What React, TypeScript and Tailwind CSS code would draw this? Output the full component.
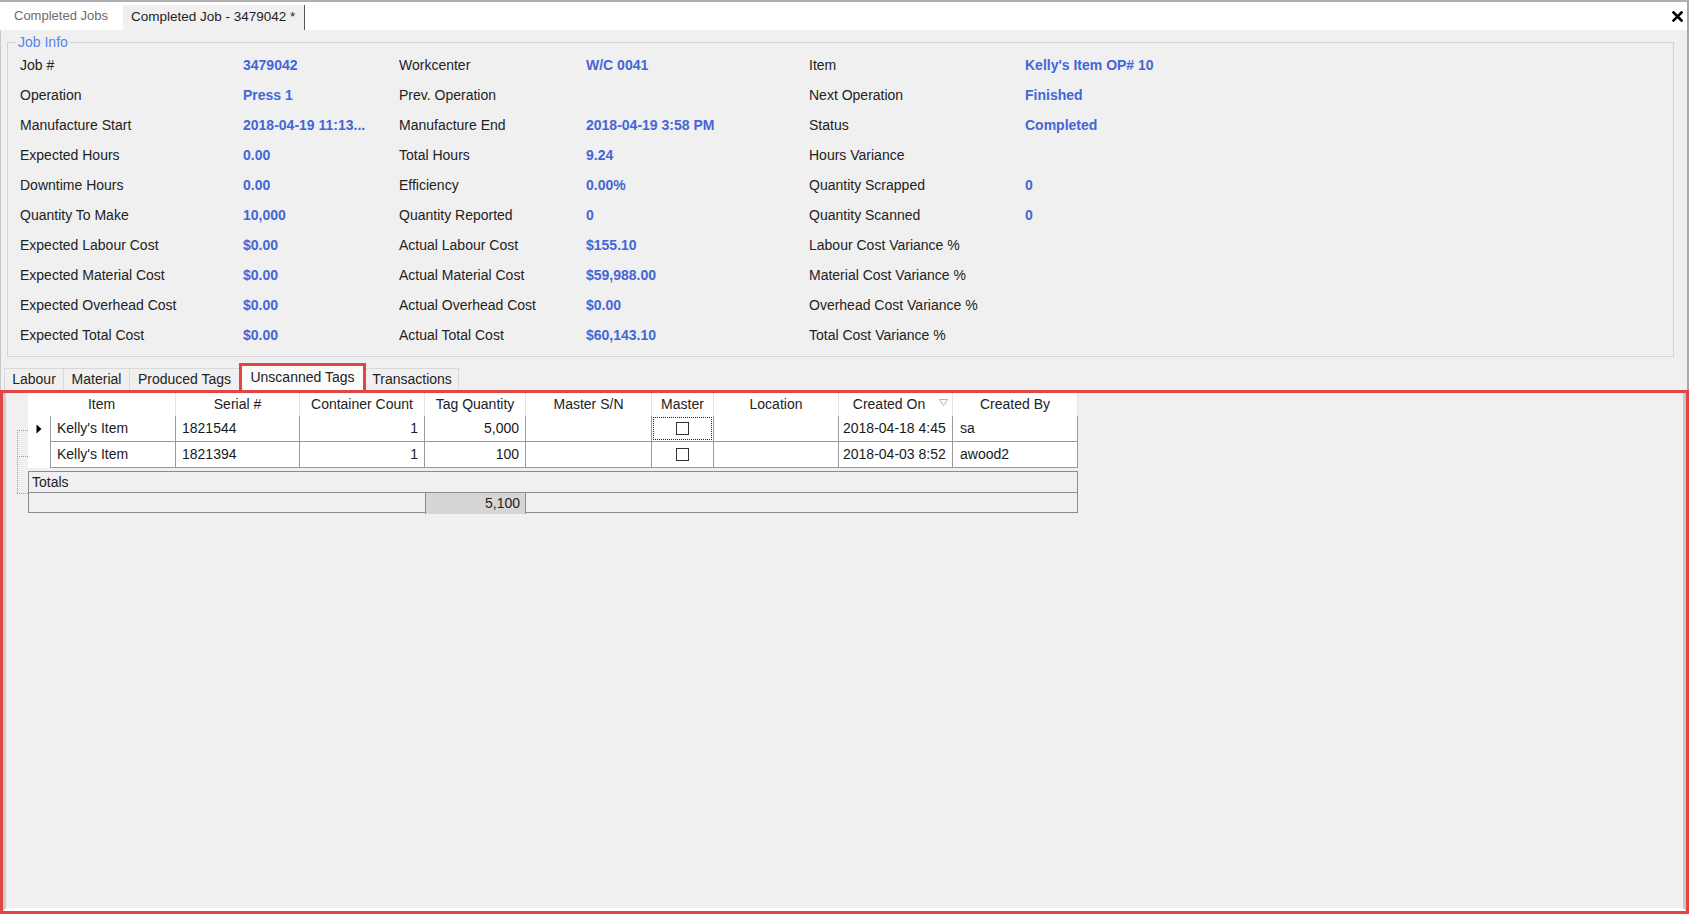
import React from "react";

type Pair = [string, string];

const info: Pair[][] = [
  [["Job #", "3479042"], ["Workcenter", "W/C 0041"], ["Item", "Kelly's Item OP# 10"]],
  [["Operation", "Press 1"], ["Prev. Operation", ""], ["Next Operation", "Finished"]],
  [["Manufacture Start", "2018-04-19 11:13..."], ["Manufacture End", "2018-04-19 3:58 PM"], ["Status", "Completed"]],
  [["Expected Hours", "0.00"], ["Total Hours", "9.24"], ["Hours Variance", ""]],
  [["Downtime Hours", "0.00"], ["Efficiency", "0.00%"], ["Quantity Scrapped", "0"]],
  [["Quantity To Make", "10,000"], ["Quantity Reported", "0"], ["Quantity Scanned", "0"]],
  [["Expected Labour Cost", "$0.00"], ["Actual Labour Cost", "$155.10"], ["Labour Cost Variance %", ""]],
  [["Expected Material Cost", "$0.00"], ["Actual Material Cost", "$59,988.00"], ["Material Cost Variance %", ""]],
  [["Expected Overhead Cost", "$0.00"], ["Actual Overhead Cost", "$0.00"], ["Overhead Cost Variance %", ""]],
  [["Expected Total Cost", "$0.00"], ["Actual Total Cost", "$60,143.10"], ["Total Cost Variance %", ""]],
];

const tags = [
  { item: "Kelly's Item", serial: "1821544", count: "1", qty: "5,000", on: "2018-04-18 4:45", by: "sa", current: true },
  { item: "Kelly's Item", serial: "1821394", count: "1", qty: "100", on: "2018-04-03 8:52", by: "awood2", current: false },
];

const gridCols = "grid grid-cols-[23px_125px_124px_125px_101px_126px_62px_125px_114px_125px]";
const cellBase = "bg-white border-r border-b border-[#9a9a9a] flex overflow-hidden whitespace-nowrap text-[#1a1a1a]";
const cell = `${cellBase} items-center px-[6px]`;
const headCell = "border-r border-[#e4e4e4] flex items-center justify-center whitespace-nowrap text-[#222]";

function Checkbox() {
  return <div className="w-[13px] h-[13px] border border-[#333] bg-white" />;
}

export default function App() {
  return (
    <div className="w-[1689px] h-[914px] flex flex-col bg-[#f0f0f0] overflow-hidden font-['Liberation_Sans',Arial,sans-serif] text-[14px] text-[#222]">
      {/* document tabs */}
      <div className="h-[30px] shrink-0 flex bg-white border-t-2 border-t-[#b0b0b0] border-r-2 border-r-[#a8a8a8]">
        <div className="w-[123px] pl-[14px] flex items-center text-[13px] text-[#6d6d6d]">Completed Jobs</div>
        <div className="w-[182px] mt-[3px] pl-[8px] flex items-center bg-[#f0f0f0] border-r border-[#555] text-[13.5px] text-[#1e1e1e] whitespace-nowrap">
          Completed Job - 3479042 *
        </div>
        <div className="flex-1" />
        <div className="flex items-center pr-[4px]">
          <svg width="11" height="11" viewBox="0 0 11 11">
            <path d="M1.5 1.5 L9.5 9.5 M9.5 1.5 L1.5 9.5" stroke="#000" strokeWidth="2.6" strokeLinecap="square" />
          </svg>
        </div>
      </div>

      <div className="shrink-0 border-r-2 border-r-[#a8a8a8] border-l border-l-[#c8c8c8]">
        <fieldset className="ml-[6px] mr-[13px] mt-[4px] border border-[#d4d4d4]">
          <legend className="ml-[8px] px-[2px] leading-[16px] text-[#5a85e4]">Job Info</legend>
          <div className="pl-[12px] pb-[6px] grid grid-cols-[223px_156px_187px_223px_216px_1fr]">
            {info.map((row, i) => (
              <React.Fragment key={i}>
                {row.map(([label, value], j) => (
                  <React.Fragment key={j}>
                    <div className="h-[30px] flex items-center whitespace-nowrap">{label}</div>
                    <div className="h-[30px] flex items-center whitespace-nowrap overflow-hidden font-bold text-[#4466d6]">{value}</div>
                  </React.Fragment>
                ))}
              </React.Fragment>
            ))}
          </div>
        </fieldset>

        {/* sub tabs */}
        <div className="h-[33px] flex items-end pl-[3px]">
          <div className="w-[59px] h-[22px] flex items-center justify-center border-t border-l border-[#d9d9d9]">Labour</div>
          <div className="w-[66px] h-[22px] flex items-center justify-center border-t border-l border-[#d9d9d9]">Material</div>
          <div className="w-[110px] h-[22px] flex items-center justify-center border-t border-l border-[#d9d9d9]">Produced Tags</div>
          <div className="w-[127px] h-[30px] -mb-[3px] relative z-10 flex items-start justify-center pt-[1px] bg-[#fbfbfb] border-[3px] border-[#e04646]">
            Unscanned Tags
          </div>
          <div className="w-[93px] h-[22px] flex items-center justify-center border-t border-r border-[#d9d9d9]">Transactions</div>
        </div>
      </div>

      {/* tab page */}
      <div className="flex-1 border-[3px] border-[#e04646]">
        <div className="h-full flex border-l-[3px] border-l-[#cfcfcf] border-r-[3px] border-r-[#c8c8c8] border-b-[3px] border-b-white">
          <div className="w-[22px] shrink-0">
            <svg width="22" height="120" viewBox="0 0 22 120">
              <g stroke="#9c9c9c" strokeWidth="1" strokeDasharray="1 1" fill="none">
                <path d="M11.5 37 V100" />
                <path d="M11 37.5 H22" />
                <path d="M11 63.5 H22" />
                <path d="M11 100.5 H22" />
              </g>
            </svg>
          </div>

          <div className="w-[1050px] shrink-0">
            {/* header */}
            <div className={`${gridCols} h-[23px] bg-white`}>
              <div className={`${headCell} col-span-2`}>Item</div>
              <div className={headCell}>Serial #</div>
              <div className={headCell}>Container Count</div>
              <div className={headCell}>Tag Quantity</div>
              <div className={headCell}>Master S/N</div>
              <div className={headCell}>Master</div>
              <div className={headCell}>Location</div>
              <div className={`${headCell} justify-between`}>
                <span className="flex-1 text-center">Created On</span>
                <svg width="9" height="7" viewBox="0 0 9 7" className="mr-[4px] -mt-[4px]">
                  <path d="M0.5 0.5 H8.5 L4.5 6.5 Z" fill="none" stroke="#b4b4b4" strokeWidth="1" />
                </svg>
              </div>
              <div className={headCell}>Created By</div>
            </div>

            {/* rows */}
            {tags.map((t, i) => (
              <div key={i} className={`${gridCols} h-[26px]`}>
                <div className="bg-white border-r border-[#9a9a9a] flex items-center justify-center">
                  {t.current && (
                    <svg width="6" height="10" viewBox="0 0 6 10">
                      <path d="M0.5 0.5 L5.5 5 L0.5 9.5 Z" fill="#000" />
                    </svg>
                  )}
                </div>
                <div className={cell}>{t.item}</div>
                <div className={cell}>{t.serial}</div>
                <div className={`${cell} justify-end`}>{t.count}</div>
                <div className={`${cell} justify-end`}>{t.qty}</div>
                <div className={cell} />
                <div className="bg-white border-r border-b border-[#9a9a9a] flex">
                  <div className={`flex-1 m-[1px] flex items-center justify-center ${t.current ? "border border-dotted border-[#222]" : ""}`}>
                    <Checkbox />
                  </div>
                </div>
                <div className={cell} />
                <div className={`${cellBase} items-start pt-[2px] pl-[4px]`}>{t.on}</div>
                <div className={`${cell} pl-[7px]`}>{t.by}</div>
              </div>
            ))}

            {/* totals */}
            <div className="mt-[3px] border border-[#8c8c8c] bg-[#f0f0f0]">
              <div className="h-[21px] border-b border-[#8c8c8c] pl-[3px] flex items-center">Totals</div>
              <div className="h-[19px] grid grid-cols-[396px_101px_1fr]">
                <div />
                <div className="bg-[#d6d6d6] border-l border-r border-[#8c8c8c] flex items-center justify-end pr-[5px]">5,100</div>
                <div />
              </div>
            </div>
          </div>
        </div>
      </div>
    </div>
  );
}
